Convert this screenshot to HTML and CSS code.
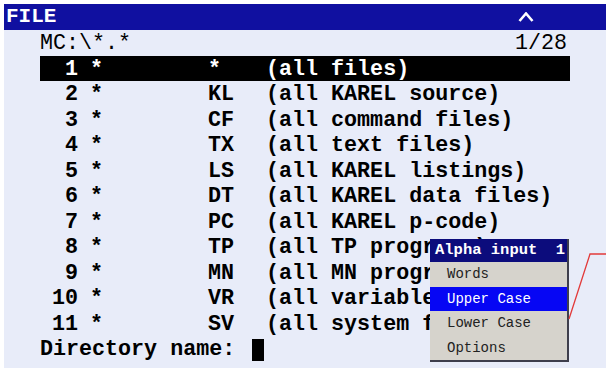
FILE: index.html
```html
<!DOCTYPE html>
<html>
<head>
<meta charset="utf-8">
<link rel="stylesheet" href="styles.css">
</head>
<body>
<div class="screen">
  <div class="titlebar">
    <span class="title">FILE</span>
    <svg class="caret" width="16" height="10" viewBox="0 0 16 10"><path d="M1.5 9 L8 1.5 L14.5 9" fill="none" stroke="#fff" stroke-width="2.6"/></svg>
  </div>
  <div class="list">
    <div class="pathrow"><span>MC:\*.*</span><span>1/28</span></div>
    <div class="row sel"><span class="num">1</span><span class="star">*</span><span class="type">*</span><span class="desc">(all files)</span></div>
    <div class="row"><span class="num">2</span><span class="star">*</span><span class="type">KL</span><span class="desc">(all KAREL source)</span></div>
    <div class="row"><span class="num">3</span><span class="star">*</span><span class="type">CF</span><span class="desc">(all command files)</span></div>
    <div class="row"><span class="num">4</span><span class="star">*</span><span class="type">TX</span><span class="desc">(all text files)</span></div>
    <div class="row"><span class="num">5</span><span class="star">*</span><span class="type">LS</span><span class="desc">(all KAREL listings)</span></div>
    <div class="row"><span class="num">6</span><span class="star">*</span><span class="type">DT</span><span class="desc">(all KAREL data files)</span></div>
    <div class="row"><span class="num">7</span><span class="star">*</span><span class="type">PC</span><span class="desc">(all KAREL p-code)</span></div>
    <div class="row"><span class="num">8</span><span class="star">*</span><span class="type">TP</span><span class="desc">(all TP programs)</span></div>
    <div class="row"><span class="num">9</span><span class="star">*</span><span class="type">MN</span><span class="desc">(all MN programs)</span></div>
    <div class="row"><span class="num">10</span><span class="star">*</span><span class="type">VR</span><span class="desc">(all variable files)</span></div>
    <div class="row"><span class="num">11</span><span class="star">*</span><span class="type">SV</span><span class="desc">(all system files)</span></div>
    <div class="prompt"><span>Directory name:</span><span class="cursor"></span></div>
  </div>
  <div class="popup">
    <div class="pophead"><span>Alpha input</span><span>1</span></div>
    <div class="item">Words</div>
    <div class="item active">Upper Case</div>
    <div class="item">Lower Case</div>
    <div class="item">Options</div>
  </div>
  <svg class="pointer" width="50" height="70" viewBox="0 0 50 70"><path d="M2 67 L23 2 L50 2" fill="none" stroke="#e23a3a" stroke-width="1.3"/></svg>
</div>
</body>
</html>
```

FILE: styles.css
```css
html, body {
  margin: 0;
  padding: 0;
  background: #ffffff;
}
body {
  font-family: "Courier New", "Nimbus Mono PS", "Nimbus Mono L", "FreeMono", "Liberation Mono", monospace;
}
.screen {
  position: relative;
  margin: 4px 7px 2px 4px;
  width: 602px;
  height: 364px;
  background: #e8ecf9;
  overflow: hidden;
}
.titlebar {
  height: 26px;
  background: #1010a0;
  color: #ffffff;
  display: flex;
  align-items: center;
  justify-content: space-between;
  padding: 0 72px 0 2px;
}
.title {
  font-weight: bold;
  font-size: 21px;
  line-height: 26px;
}
.caret {
  display: block;
}
.list {
  padding-left: 36px;
  width: 530px;
  color: #000000;
}
.pathrow {
  display: flex;
  justify-content: space-between;
  font-size: 21.7px;
  line-height: 22.5px;
  height: 22.5px;
  padding: 3px 3px 0 0;
}
.row {
  display: grid;
  grid-template-columns: 38px 130px 58px 1fr;
  font-size: 21.7px;
  font-weight: bold;
  line-height: 25.5px;
  height: 25.5px;
  padding-top: 1px;
  box-sizing: border-box;
  white-space: pre;
}
.row.sel {
  background: #000000;
  color: #ffffff;
}
.num {
  text-align: right;
}
.star {
  padding-left: 12px;
}
.prompt {
  display: flex;
  align-items: center;
  font-size: 21.7px;
  font-weight: bold;
  line-height: 25.5px;
  height: 25.5px;
  padding-top: 1px;
}
.cursor {
  display: inline-block;
  width: 12px;
  height: 22px;
  background: #000000;
  margin-left: 17px;
}
.popup {
  position: absolute;
  left: 426px;
  top: 235px;
  width: 137px;
  background: #d6d3cc;
  border-right: 2px solid #3e3e4c;
  border-bottom: 2px solid #3e3e4c;
}
.pophead {
  display: flex;
  justify-content: space-between;
  height: 23px;
  line-height: 23px;
  background: #0c0c7c;
  color: #ffffff;
  font-weight: bold;
  font-size: 15.5px;
  padding: 0 2px 0 5px;
}
.item {
  height: 24.5px;
  line-height: 24.5px;
  font-size: 14px;
  color: #222222;
  padding-left: 17px;
}
.item.active {
  background: #0606f4;
  color: #ffffff;
}
.pointer {
  position: absolute;
  left: 563px;
  top: 248px;
}
```
